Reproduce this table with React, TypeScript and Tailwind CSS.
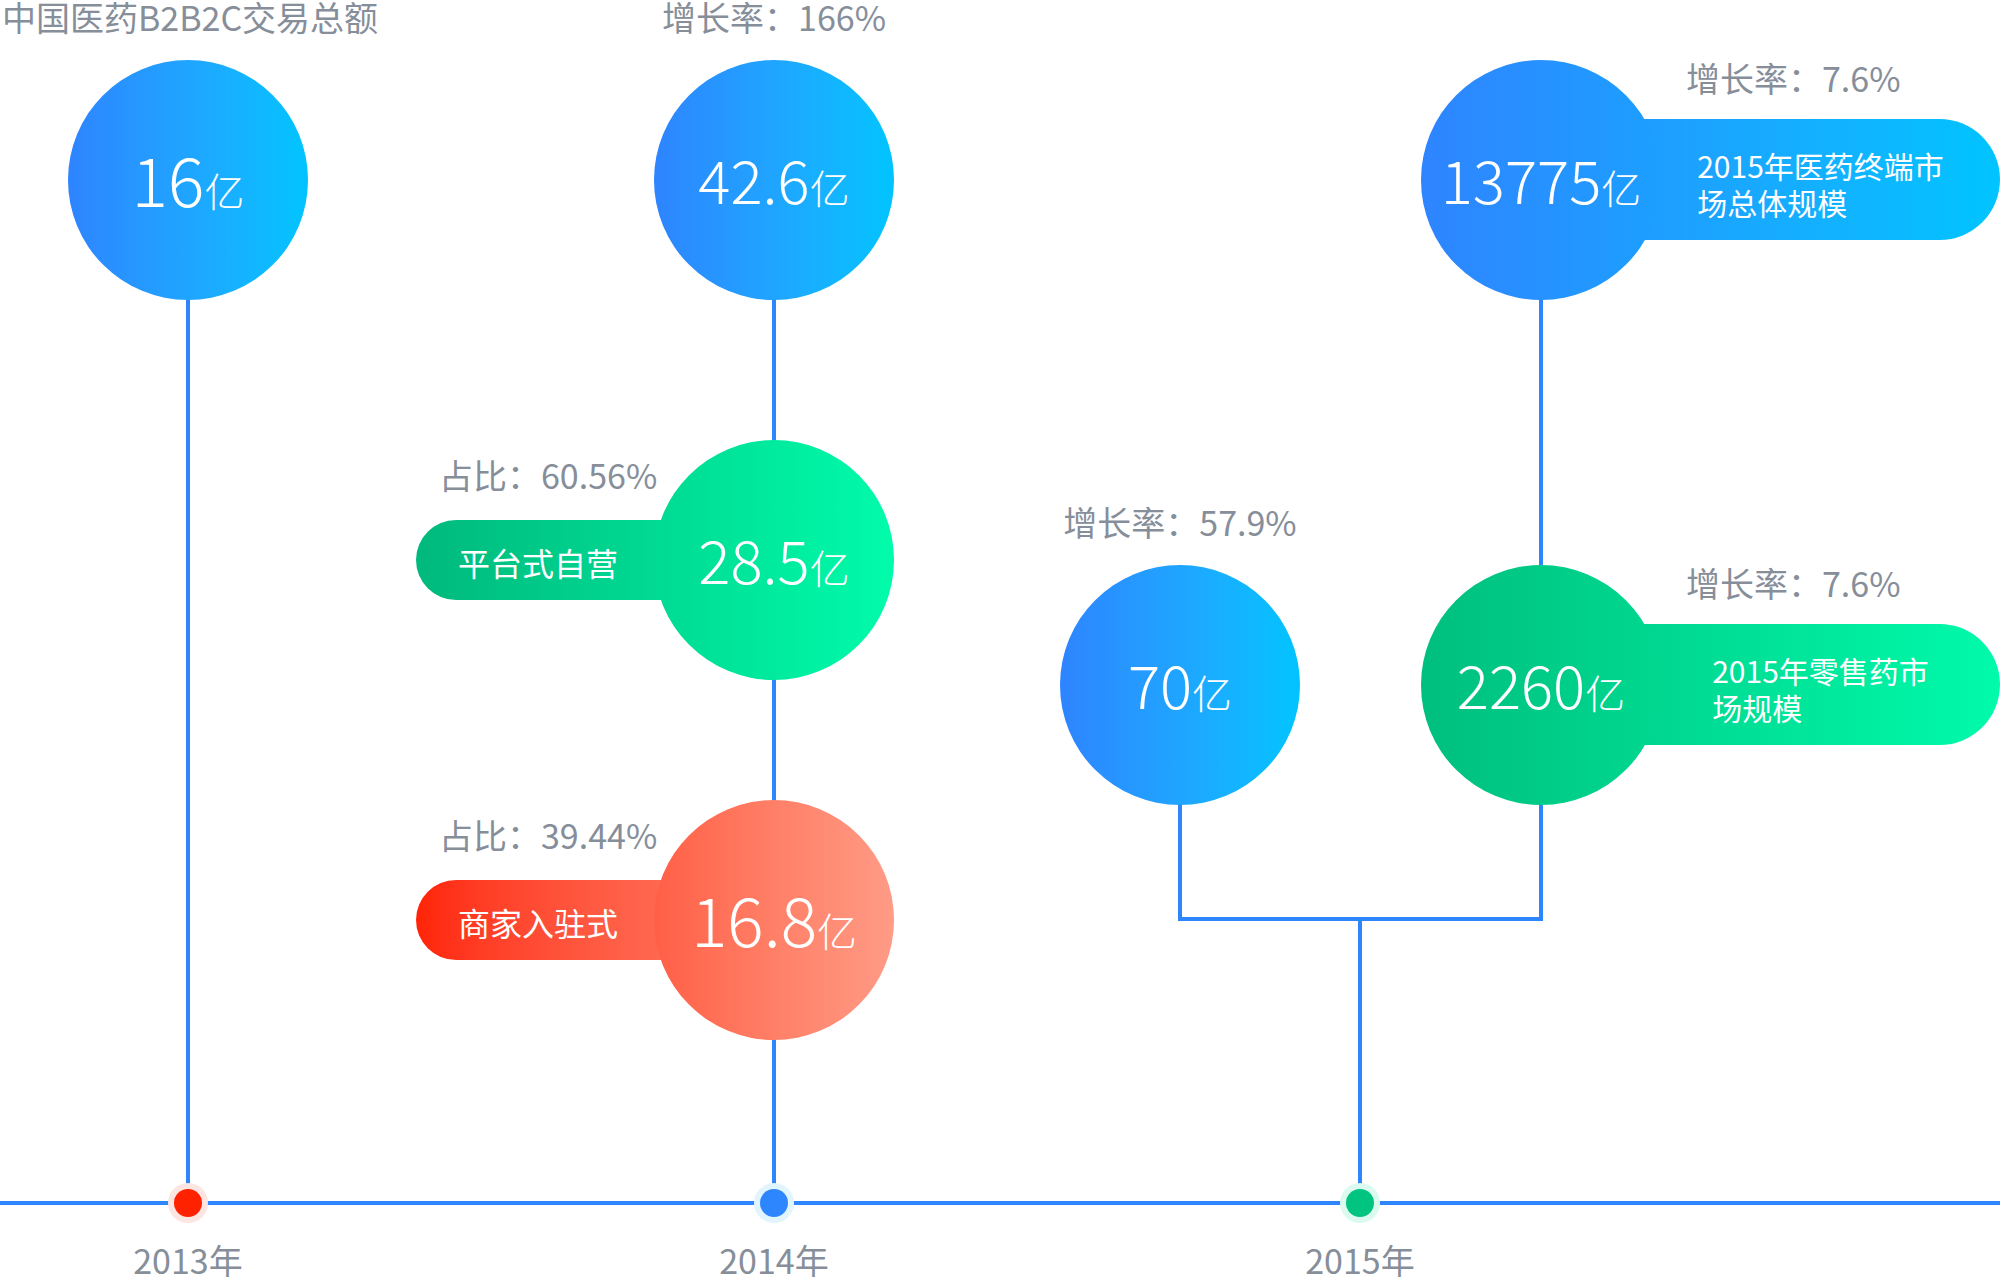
import React from 'react';

type Size = 'lg' | 'md';

// value + 亿, baseline aligned
const Amount: React.FC<{ value: string; size: Size }> = ({ value, size }) => (
  <div className="flex items-baseline pb-[4px] font-light text-white">
    <span className={size === 'lg' ? 'text-[68px] leading-none' : 'text-[60px] leading-none'}>{value}</span>
    <span className="text-[40px] leading-none">亿</span>
  </div>
);

const Label: React.FC<{ className?: string; children: React.ReactNode }> = ({ className = '', children }) => (
  <div className={`whitespace-nowrap text-[34px] leading-none text-[#868e9a] ${className}`}>{children}</div>
);

const Circle: React.FC<{ grad: string; value: string; size: Size; className?: string }> = ({ grad, value, size, className = '' }) => (
  <div className={`flex h-[240px] w-[240px] shrink-0 items-center justify-center rounded-full bg-linear-to-r ${grad} ${className}`}>
    <Amount value={value} size={size} />
  </div>
);

// label over a single circle
const Bubble: React.FC<{ label?: string; grad: string; value: string; size: Size; className: string }> = ({ label, grad, value, size, className }) => (
  <div className={`absolute flex w-[240px] flex-col items-center gap-[26px] ${className}`}>
    {label && <Label>{label}</Label>}
    <Circle grad={grad} value={value} size={size} />
  </div>
);

// pill sticking out to the left of the circle (2014 split)
const LeftPill: React.FC<{ label: string; text: string; pillGrad: string; grad: string; value: string; size: Size; className: string }> = ({
  label,
  text,
  pillGrad,
  grad,
  value,
  size,
  className,
}) => (
  <div className={`absolute flex items-start ${className}`}>
    <div className="flex flex-col gap-[28px] pt-[18px]">
      <Label className="pl-[23px]">{label}</Label>
      <div className={`flex h-[80px] w-[358px] items-center rounded-l-full bg-linear-to-r ${pillGrad} pl-[42px] pt-[4px] text-[32px] leading-none text-white`}>
        {text}
      </div>
    </div>
    <Circle grad={grad} value={value} size={size} className="-ml-[120px]" />
  </div>
);

// pill sticking out to the right of the circle (2015 market size)
const RightPill: React.FC<{ label: string; lines: [string, string]; pillGrad: string; grad: string; value: string; className: string }> = ({
  label,
  lines,
  pillGrad,
  grad,
  value,
  className,
}) => (
  <div className={`absolute flex items-start ${className}`}>
    <Circle grad={grad} value={value} size="md" className="relative z-10" />
    <div className="-ml-[120px] flex flex-col gap-[24px] pt-[1px]">
      <Label className="pl-[145px]">{label}</Label>
      <div className={`flex h-[121px] w-[459px] items-center justify-center rounded-r-full bg-linear-to-r ${pillGrad} pl-[120px] pr-[20px] pt-[8px]`}>
        <div className="text-[30px] leading-[37px] text-white">
          {lines[0]}
          <br />
          {lines[1]}
        </div>
      </div>
    </div>
  </div>
);

const Tick: React.FC<{ ring: string; fill: string; year: string }> = ({ ring, fill, year }) => (
  <div className="flex w-[200px] flex-col items-center gap-[20px]">
    <div className={`flex h-[40px] w-[40px] items-center justify-center rounded-full ${ring}`}>
      <div className={`h-[28px] w-[28px] rounded-full ${fill}`} />
    </div>
    <Label>{year}</Label>
  </div>
);

const BLUE = 'from-[#2e84ff] to-[#00c4ff]';

export default function App() {
  return (
    <div className="relative h-[1280px] w-[2000px] overflow-hidden bg-white font-['Noto_Sans_CJK_SC','Noto_Sans',sans-serif]">
      {/* connectors + axis */}
      <svg className="absolute inset-0" width="2000" height="1280" aria-hidden="true">
        <g stroke="#2e86ff" strokeWidth="4" fill="none">
          <line x1="188" y1="180" x2="188" y2="1203" />
          <line x1="774" y1="180" x2="774" y2="1203" />
          <line x1="1541" y1="180" x2="1541" y2="919" />
          <line x1="1180" y1="685" x2="1180" y2="919" />
          <line x1="1178" y1="919" x2="1543" y2="919" />
          <line x1="1360" y1="919" x2="1360" y2="1203" />
          <line x1="0" y1="1203" x2="2000" y2="1203" />
        </g>
      </svg>

      <Label className="absolute left-[2px] top-0 text-[32px]">中国医药B2B2C交易总额</Label>

      {/* 2013 */}
      <Bubble className="left-[68px] top-[60px]" grad={BLUE} value="16" size="lg" />

      {/* 2014 */}
      <Bubble className="left-[654px] top-0" label="增长率：166%" grad={BLUE} value="42.6" size="md" />
      <LeftPill
        className="left-[416px] top-[440px]"
        label="占比：60.56%"
        text="平台式自营"
        pillGrad="from-[#00b97c] to-[#00eb9f]"
        grad="from-[#00da93] to-[#00fcaa]"
        value="28.5"
        size="md"
      />
      <LeftPill
        className="left-[416px] top-[800px]"
        label="占比：39.44%"
        text="商家入驻式"
        pillGrad="from-[#ff2305] to-[#ff7d66]"
        grad="from-[#ff5f45] to-[#ff9b86]"
        value="16.8"
        size="lg"
      />

      {/* 2015 */}
      <Bubble className="left-[1060px] top-[505px]" label="增长率：57.9%" grad={BLUE} value="70" size="md" />
      <RightPill
        className="left-[1421px] top-[60px]"
        label="增长率：7.6%"
        lines={['2015年医药终端市', '场总体规模']}
        pillGrad="from-[#2491ff] to-[#00c4ff]"
        grad="from-[#2e84ff] to-[#1b9fff]"
        value="13775"
      />
      <RightPill
        className="left-[1421px] top-[565px]"
        label="增长率：7.6%"
        lines={['2015年零售药市', '场规模']}
        pillGrad="from-[#00cb87] to-[#00fbaa]"
        grad="from-[#00bf7e] to-[#00d890]"
        value="2260"
      />

      {/* axis ticks */}
      <div className="absolute left-[88px] top-[1183px] flex gap-[386px]">
        <Tick ring="bg-[#fde6e1]" fill="bg-[#ff2200]" year="2013年" />
        <Tick ring="bg-[#e2f5ff]" fill="bg-[#2e86ff]" year="2014年" />
        <Tick ring="bg-[#dcfaf0]" fill="bg-[#00c47f]" year="2015年" />
      </div>
    </div>
  );
}
